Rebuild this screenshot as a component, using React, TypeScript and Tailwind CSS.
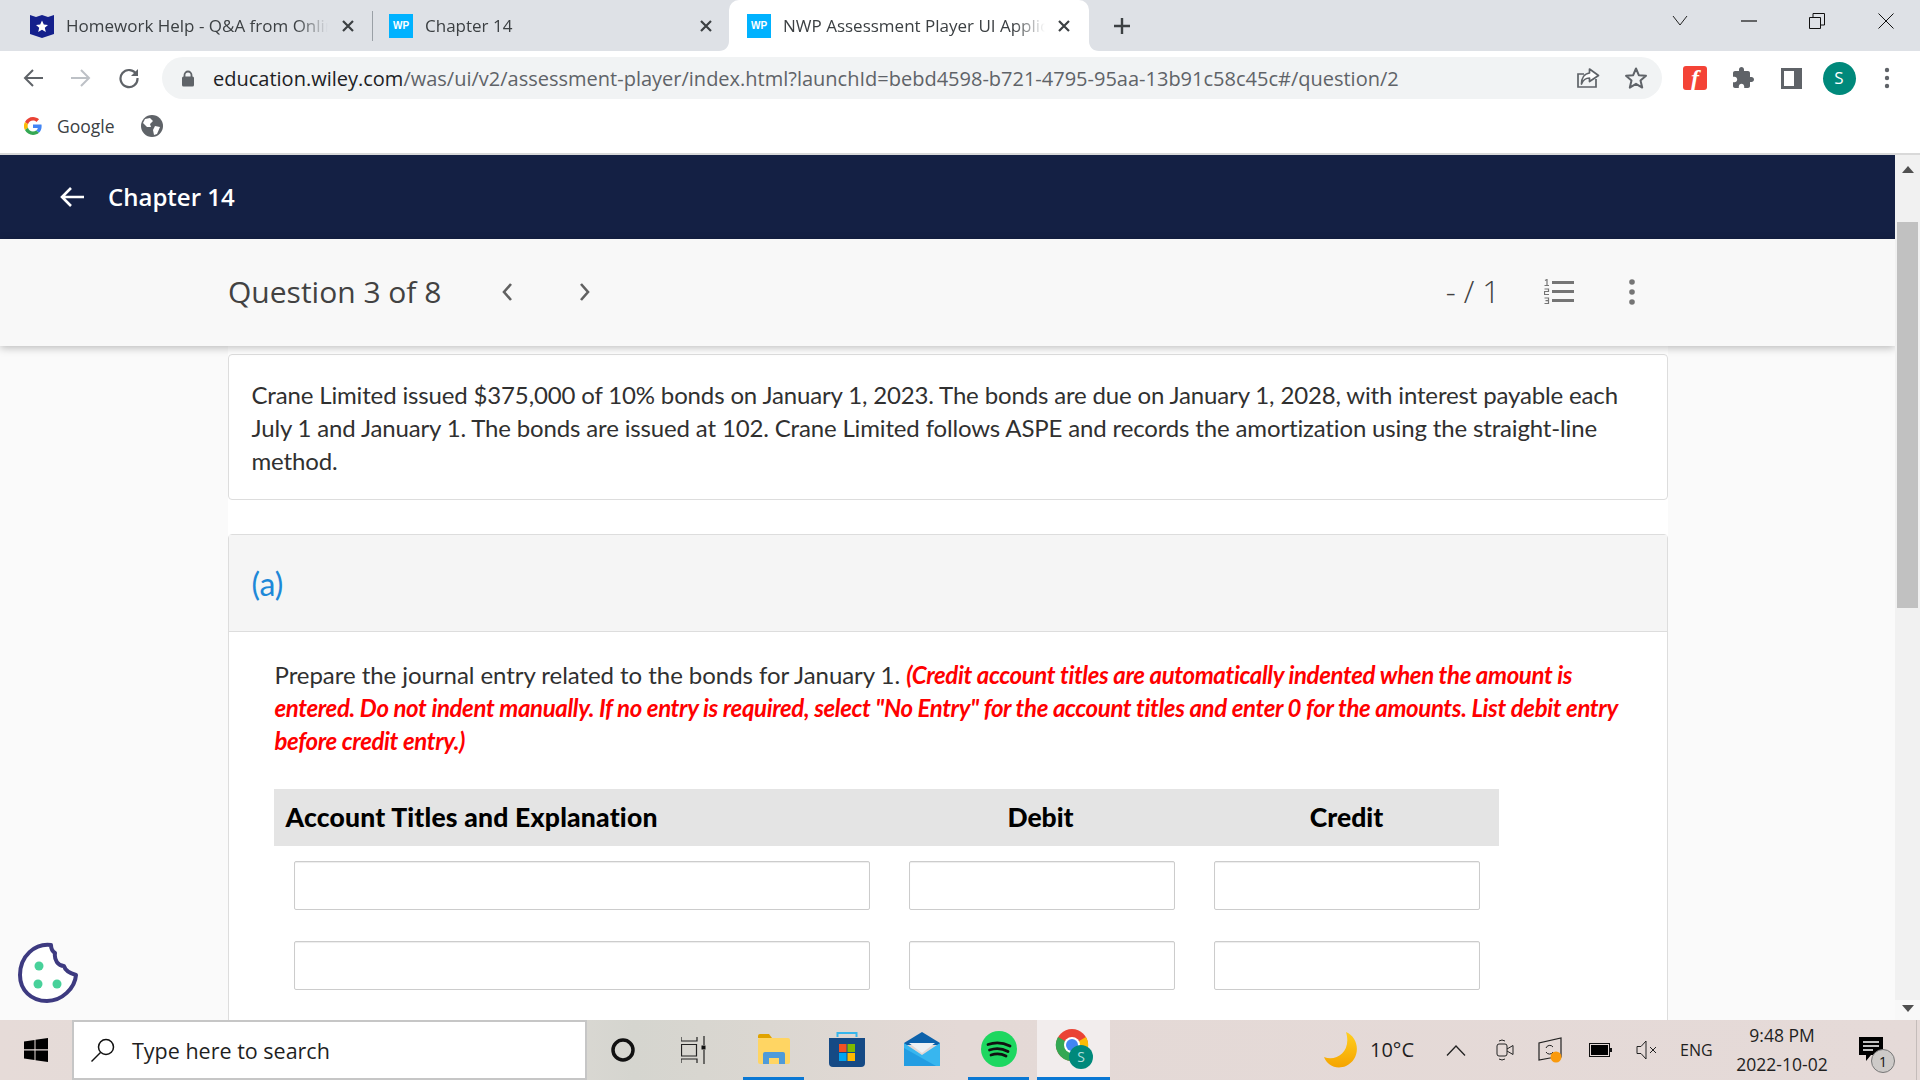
import React from "react";

const UI = "font-['Open_Sans',sans-serif]";

function X({ c = "#3c4043" }: { c?: string }) {
  return (
    <svg width="14" height="14" viewBox="0 0 14 14"><path d="M2 2 12 12M12 2 2 12" stroke={c} strokeWidth="2.2" /></svg>
  );
}

function WP() {
  return (
    <div className="w-6 h-6 shrink-0 bg-[#00b2ff] flex items-center justify-center text-white text-[10px] font-bold font-['Liberation_Sans',sans-serif]">WP</div>
  );
}

function Tab({ w, icon, title, active, children }: { w: string; icon: React.ReactNode; title: string; active?: boolean; children?: React.ReactNode }) {
  return (
    <div className={`${w} shrink-0 h-[51px] flex items-center relative ${active ? "bg-white rounded-t-[10px]" : ""}`}>
      {active && (
        <>
          <svg className="absolute left-[-10px] bottom-0" width="10" height="10" viewBox="0 0 10 10"><path d="M10 0V10H0C6 10 10 6 10 0Z" fill="#fff" /></svg>
          <svg className="absolute right-[-10px] bottom-0" width="10" height="10" viewBox="0 0 10 10"><path d="M0 0V10H10C4 10 0 6 0 0Z" fill="#fff" /></svg>
        </>
      )}
      {icon}
      <div className="ml-3 flex-1 overflow-hidden whitespace-nowrap text-[17px] text-[#3c4043] [mask-image:linear-gradient(to_right,black_88%,transparent)]">{title}</div>
      {children}
    </div>
  );
}

function TabStrip() {
  return (
    <div className={`h-[51px] bg-[#dee1e6] flex items-center ${UI}`}>
      <div className="w-[30px]" />
      <Tab
        w="w-[298px]"
        title="Homework Help - Q&A from Online Tutors"
        icon={
          <svg width="24" height="24" viewBox="0 0 24 24" className="shrink-0">
            <path d="M0 1 6 3 12 1 18 3 24 1V20L12 24 0 20Z" fill="#14208c" />
            <path d="M12 6.5 13.8 10.500 18 11 14.800 13.800 15.800 18 12 15.800 8.200 18 9.200 13.800 6 11 10.200 10.500Z" fill="#fff" />
          </svg>
        }
      />
      <div className="w-[18px] flex justify-center ml-[11px] mr-[15px]"><X /></div>
      <div className="w-px h-[30px] bg-[#9aa0a6] mr-[16px]" />
      <Tab w="w-[296px]" icon={<WP />} title="Chapter 14" />
      <div className="w-[18px] flex justify-center ml-[12px] mr-[14px]"><X /></div>
      <Tab w="w-[360px] pl-[18px] pr-[16px]" icon={<WP />} active title="NWP Assessment Player UI Application">
        <div className="w-[18px] ml-[10px] flex justify-center"><X /></div>
      </Tab>
      <div className="w-[66px] flex justify-center">
        <svg width="20" height="20" viewBox="0 0 20 20"><path d="M10 2V18M2 10H18" stroke="#3c4043" strokeWidth="2.4" /></svg>
      </div>
      <div className="flex-1" />
      <div className="flex items-center pb-[10px]">
        <div className="w-[69px] flex justify-center">
          <svg width="16" height="11" viewBox="0 0 16 11"><path d="M1 1 8 10 15 1" fill="none" stroke="#222" /></svg>
        </div>
        <div className="w-[69px] flex justify-center">
          <svg width="16" height="2" viewBox="0 0 16 2"><path d="M0 1H16" stroke="#111" strokeWidth="1.2" /></svg>
        </div>
        <div className="w-[68px] flex justify-center">
          <svg width="16" height="16" viewBox="0 0 16 16"><path d="M.5 4.500H11.500V15.500H.5ZM4 4V.5H15.500V12H12" fill="none" stroke="#111" /></svg>
        </div>
        <div className="w-[69px] flex justify-center">
          <svg width="16" height="16" viewBox="0 0 16 16"><path d="M.5.5 15.500 15.500M15.500.5 .5 15.500" stroke="#111" /></svg>
        </div>
      </div>
    </div>
  );
}

function Toolbar() {
  return (
    <div className={`h-[54px] bg-white flex items-center ${UI}`}>
      <div className="w-[66px] flex justify-center">
        <svg width="22" height="20" viewBox="0 0 22 20"><path d="M21 10H3M11 2 3 10 11 18" fill="none" stroke="#5f6368" strokeWidth="2" /></svg>
      </div>
      <div className="w-[30px] flex justify-center">
        <svg width="22" height="20" viewBox="0 0 22 20"><path d="M1 10H19M11 2 19 10 11 18" fill="none" stroke="#bdc1c6" strokeWidth="2" /></svg>
      </div>
      <div className="w-[66px] flex justify-center">
        <svg width="22" height="22" viewBox="0 0 22 22"><path d="M18.500 7.500A8.500 8.500 0 1 0 19.500 11" fill="none" stroke="#5f6368" strokeWidth="2.2" /><path d="M20 2V9H13Z" fill="#5f6368" /></svg>
      </div>
      <div className="w-[1500px] h-[42px] bg-[#f1f3f4] rounded-full flex items-center">
        <div className="w-[51px] flex justify-center">
          <svg width="14" height="17" viewBox="0 0 14 17"><path d="M3.500 7V5a3.500 3.500 0 0 1 7 0V7" fill="none" stroke="#5f6368" strokeWidth="1.8" /><rect x="1" y="6.500" width="12" height="10" rx="1.500" fill="#5f6368" /></svg>
        </div>
        <div className="flex-1 mt-[1px] whitespace-nowrap text-[20px] text-[#5f6368]">
          <span className="text-[#202124]">education.wiley.com</span>/was/ui/v2/assessment-player/index.html?launchId=bebd4598-b721-4795-95aa-13b91c58c45c#/question/2
        </div>
        <svg className="mr-[24px]" width="24" height="24" viewBox="0 0 24 24"><path d="M20 13V21H2V8H8" fill="none" stroke="#5f6368" strokeWidth="1.7" /><path d="M13.500 3 22.500 9.500 13.500 15.500V12C10 12 7 14 5.500 18 5.500 12 8.500 7.500 13.500 7Z" fill="#fff" stroke="#5f6368" strokeWidth="1.7" strokeLinejoin="round" /></svg>
        <svg className="mr-[14px]" width="24" height="24" viewBox="0 0 24 24"><path d="M12 2.500 14.800 9.200 22 9.800 16.500 14.500 18.200 21.600 12 17.800 5.800 21.600 7.500 14.500 2 9.800 9.200 9.200Z" fill="none" stroke="#5f6368" strokeWidth="2" strokeLinejoin="round" /></svg>
      </div>
      <div className="w-6 h-6 ml-[21px] rounded-[3px] bg-[#f44336] flex items-center justify-center">
        <span className="text-white font-bold italic text-[24px] leading-none font-['Liberation_Serif',serif]">f</span>
      </div>
      <div className="w-[48px] ml-[12px] flex justify-center">
        <svg width="24" height="24" viewBox="0 0 24 24"><path d="M20.500 11H19V7c0-1.100-.9-2-2-2h-4V3.500C13 2.120 11.880 1 10.500 1S8 2.120 8 3.500V5H4c-1.100 0-1.990.9-1.990 2v3.800H3.500c1.490 0 2.700 1.210 2.700 2.700s-1.210 2.700-2.700 2.700H2V20c0 1.100.9 2 2 2h3.800v-1.500c0-1.490 1.210-2.700 2.700-2.700 1.490 0 2.700 1.210 2.700 2.700V22H17c1.100 0 2-.9 2-2v-4h1.500c1.380 0 2.500-1.120 2.500-2.500S21.880 11 20.500 11z" fill="#5f6368" /></svg>
      </div>
      <div className="w-[48px] flex justify-center">
        <svg width="21" height="21" viewBox="0 0 21 21"><rect width="21" height="21" fill="#5f6368" /><rect x="3" y="3" width="10" height="15" fill="#fff" /></svg>
      </div>
      <div className="w-[48px] flex justify-center">
        <div className="w-[33px] h-[33px] rounded-full bg-[#00897b] text-white flex items-center justify-center text-[17px]">S</div>
      </div>
      <div className="w-[48px] flex justify-center">
        <svg width="6" height="22" viewBox="0 0 6 22"><circle cx="3" cy="3" r="2.200" fill="#5f6368" /><circle cx="3" cy="11" r="2.200" fill="#5f6368" /><circle cx="3" cy="19" r="2.200" fill="#5f6368" /></svg>
      </div>
    </div>
  );
}

function Bookmarks() {
  return (
    <div className={`h-[50px] bg-white border-b-2 border-[#d9d9d9] flex items-center pl-[24px] pb-[6px] ${UI}`}>
      <svg width="18" height="18" viewBox="0 0 48 48">
        <path fill="#EA4335" d="M24 9.500c3.500 0 6.700 1.200 9.200 3.600l6.900-6.900C35.900 2.400 30.400 0 24 0 14.600 0 6.500 5.400 2.600 13.200l8 6.200C12.400 13.700 17.700 9.500 24 9.500z" />
        <path fill="#4285F4" d="M47 24.500c0-1.600-.1-3.100-.4-4.500H24v9h12.900c-.6 3-2.200 5.500-4.700 7.200l7.700 6C44.400 38.100 47 31.900 47 24.500z" />
        <path fill="#FBBC05" d="M10.500 28.600A14.500 14.500 0 0 1 10.500 19.400l-8-6.200a24 24 0 0 0 0 21.600z" />
        <path fill="#34A853" d="M24 48c6.500 0 11.900-2.100 15.900-5.800l-7.700-6c-2.200 1.400-4.900 2.300-8.200 2.300-6.300 0-11.600-4.200-13.500-9.900l-8 6.200C6.500 42.600 14.600 48 24 48z" />
      </svg>
      <div className="ml-[15px] w-[84px] text-[17.500px] text-[#3c4043]">Google</div>
      <svg width="22" height="22" viewBox="0 0 22 22">
        <circle cx="11" cy="11" r="11" fill="#5f6368" />
        <path d="M4 4 9 3 12 6 9 9 10 12 6 12 2 8ZM14 11 19 12 16 19 13 20 12 15Z" fill="#fff" />
      </svg>
    </div>
  );
}

function Page() {
  return (
    <div className="flex-1 min-w-0 flex flex-col bg-[#fafafa] overflow-hidden font-['Lato',sans-serif]">
      <div className="h-[84px] shrink-0 bg-[#142044] flex items-center pl-[59px] text-white">
        <svg width="25" height="24" viewBox="0 0 25 24"><path d="M25 12H3M12 3 3 12 12 21" fill="none" stroke="#fff" strokeWidth="2.600" /></svg>
        <span className={`ml-[24px] text-[24px] font-semibold ${UI}`}>Chapter 14</span>
      </div>
      <div className="h-[107px] shrink-0 bg-[#f8f8f8] relative z-10 shadow-[0_2px_8px_rgba(0,0,0,0.25)] flex items-center pl-[228px] pb-[2px]">
        <span className={`w-[272px] text-[30px] text-[#424242] ${UI}`}>Question 3 of 8</span>
        <svg width="14" height="22" viewBox="0 0 14 22"><path d="M11 3 4 11 11 19" fill="none" stroke="#616161" strokeWidth="2.600" /></svg>
        <svg className="ml-[64px]" width="14" height="22" viewBox="0 0 14 22"><path d="M3 3 10 11 3 19" fill="none" stroke="#616161" strokeWidth="2.600" /></svg>
        <div className="flex-1" />
        <span className={`text-[31px] text-[#424242] font-light ${UI}`}>- / 1</span>
        <svg className="ml-[44px]" width="30" height="25" viewBox="0 0 30 25">
          <path d="M8 3.500H30M8 12.500H30M8 21.500H30" stroke="#757575" strokeWidth="3" />
          <path d="M1 1.500 3 .5V6.500M.5 6.500H5M.5 10H4.500V12.500H.5V15.500H5M.5 19H4.500V24.500H.5M1.500 21.700H4.500" fill="none" stroke="#757575" strokeWidth="1.200" />
        </svg>
        <svg className="ml-[55px] mr-[260px]" width="6" height="26" viewBox="0 0 6 26"><circle cx="3" cy="3" r="2.800" fill="#757575" /><circle cx="3" cy="13" r="2.800" fill="#757575" /><circle cx="3" cy="23" r="2.800" fill="#757575" /></svg>
      </div>
      <div className="flex-1 min-h-0 mx-auto w-[1440px] bg-white pt-2 overflow-hidden">
        <div className="h-[146px] border border-[#dddddd] rounded-[4px] bg-white px-[23px] pt-[23px] text-[24px] tracking-[-0.15px] leading-[33px] text-[#303030]">
          Crane Limited issued $375,000 of 10% bonds on January 1, 2023. The bonds are due on January 1, 2028, with interest payable each July 1 and January 1. The bonds are issued at 102. Crane Limited follows ASPE and records the amortization using the straight-line method.
        </div>
        <div className="mt-[34px] border border-[#dddddd] rounded-t-[4px] h-[600px]">
          <div className="h-[97px] bg-[#f5f5f5] border-b border-[#dddddd] flex items-center pl-[23px] pt-[2px] text-[32px] text-[#1e88d8]">(a)</div>
          <div className="pl-[46px] pr-[26px] pt-[26px]">
            <p className="text-[24px] leading-[33px] text-[#303030] tracking-[-0.05px]">
              Prepare the journal entry related to the bonds for January 1.{" "}
              <span className="text-[#ff0000] font-bold italic tracking-[-0.36px]">
                (Credit account titles are automatically indented when the amount is entered. Do not indent manually. If no entry is required, select "No Entry" for the account titles and enter 0 for the amounts. List debit entry before credit entry.)
              </span>
            </p>
            <div className="mt-[32px] -ml-[1px] w-[1225px] h-[57px] pt-[1px] bg-[#e4e4e4] grid grid-cols-[613px_308px_304px] items-center text-[26.500px] font-black text-black">
              <div className="pl-[12px] tracking-[0.2px]">Account Titles and Explanation</div>
              <div className="text-center">Debit</div>
              <div className="text-center">Credit</div>
            </div>
            <div className="mt-[15px] ml-[19px] flex flex-col gap-[31px]">
              {[0, 1].map((i) => (
                <div key={i} className="flex gap-[39px]">
                  <div className="w-[576px] h-[49px] border border-[#cccccc] rounded-[2px] bg-white shadow-[inset_0_1px_1px_rgba(0,0,0,0.075)]" />
                  <div className="w-[266px] h-[49px] border border-[#cccccc] rounded-[2px] bg-white shadow-[inset_0_1px_1px_rgba(0,0,0,0.075)]" />
                  <div className="w-[266px] h-[49px] border border-[#cccccc] rounded-[2px] bg-white shadow-[inset_0_1px_1px_rgba(0,0,0,0.075)]" />
                </div>
              ))}
            </div>
          </div>
        </div>
      </div>
    </div>
  );
}

function Scrollbar() {
  return (
    <div className="w-[25px] shrink-0 bg-[#f1f1f1] flex flex-col items-center">
      <div className="h-[67px] w-full flex justify-center pt-[11px]">
        <svg width="12" height="7" viewBox="0 0 12 7"><path d="M6 0 12 7H0Z" fill="#505050" /></svg>
      </div>
      <div className="h-[386px] w-[21px] bg-[#c1c1c1]" />
      <div className="flex-1" />
      <div className="h-[20px] w-full flex justify-center pt-[5px] bg-[#f8f8f8]">
        <svg width="12" height="7" viewBox="0 0 12 7"><path d="M0 0H12L6 7Z" fill="#505050" /></svg>
      </div>
    </div>
  );
}

function Slot({ w, on, bg, children }: { w: string; on?: boolean; bg?: string; children: React.ReactNode }) {
  return (
    <div className={`${w} h-[60px] shrink-0 flex items-center justify-center border-b-[3px] ${on ? "border-[#0a78d4]" : "border-transparent"} ${bg ?? ""}`}>
      {children}
    </div>
  );
}

function Taskbar() {
  return (
    <div className={`h-[60px] shrink-0 flex items-center bg-[linear-gradient(90deg,#e6dbd8_0%,#e0dcd8_25%,#d5d5cf_33%,#dbd7d1_40%,#e4d9d6_50%,#e5dad8_100%)] ${UI}`}>
      <div className="w-[72px] flex justify-center">
        <svg width="24" height="24" viewBox="0 0 24 24"><path d="M0 3.500 10.500 2V11.300H0ZM11.500 1.800 24 0V11.300H11.500ZM0 12.500H10.500V22L0 20.500ZM11.500 12.500H24V24L11.500 22.200Z" fill="#000" /></svg>
      </div>
      <div className="w-[515px] h-[60px] bg-white border-2 border-[#c6c6c6] flex items-center pl-[16px]">
        <svg width="26" height="26" viewBox="0 0 26 26"><circle cx="16" cy="10" r="7.500" fill="none" stroke="#111" strokeWidth="1.500" /><path d="M10.500 15.500 1.500 24.500" stroke="#111" strokeWidth="1.500" /></svg>
        <span className="ml-[16px] mt-[2px] text-[21.500px] text-[#1f1f1f]">Type here to search</span>
      </div>
      <div className="w-[72px] flex justify-center">
        <svg width="26" height="26" viewBox="0 0 26 26"><circle cx="13" cy="13" r="10" fill="none" stroke="#111" strokeWidth="3.500" /></svg>
      </div>
      <div className="w-[70px] flex justify-center">
        <svg width="26" height="28" viewBox="0 0 26 28"><path d="M0 1V5H16V1M0 27V23H16V27M.5 8.500H15.500V20H.5ZM23 0V9M23 14V28" fill="none" stroke="#222" strokeWidth="1.200" /><rect x="20.500" y="9.500" width="4" height="4" fill="#111" /></svg>
      </div>
      <div className="w-[14px]" />
      <Slot w="w-[61px]" on>
        <svg width="32" height="32" viewBox="0 0 32 32">
          <path d="M0 3a2 2 0 0 1 2-2H11L14 5H0Z" fill="#e0a300" />
          <rect x="0" y="5" width="32" height="26" rx="2" fill="#ffd563" />
          <path d="M5 31V21a2 2 0 0 1 2-2H25a2 2 0 0 1 2 2V31H21V25H11V31Z" fill="#4f9bd9" />
        </svg>
      </Slot>
      <div className="w-[12px]" />
      <Slot w="w-[62px]">
        <svg width="36" height="36" viewBox="0 0 36 36">
          <path d="M8.500 6V2H27.500V6" fill="none" stroke="#36b6ec" strokeWidth="2" />
          <path d="M0 7H36V32a4 4 0 0 1-4 4H4a4 4 0 0 1-4-4Z" fill="#154a85" />
          <rect x="10" y="13" width="7.500" height="8" fill="#f25022" /><rect x="18.500" y="13" width="7.500" height="8" fill="#7fba00" />
          <rect x="10" y="22" width="7.500" height="8" fill="#00a4ef" /><rect x="18.500" y="22" width="7.500" height="8" fill="#ffb900" />
        </svg>
      </Slot>
      <div className="w-[13px]" />
      <Slot w="w-[62px]">
        <svg width="36" height="34" viewBox="0 0 36 34">
          <path d="M0 11 18 0 36 11V13H0Z" fill="#0d62ab" />
          <path d="M5 11H31L18 21Z" fill="#eef1f4" />
          <path d="M0 11 18 23 36 11V34H0Z" fill="#38b6ef" />
          <path d="M0 34V16L32 34Z" fill="#1b93dd" opacity="0.7" />
        </svg>
      </Slot>
      <div className="w-[15px]" />
      <Slot w="w-[61px]" on>
        <svg width="36" height="36" viewBox="0 0 36 36">
          <circle cx="18" cy="18" r="18" fill="#1ed760" />
          <path d="M7 13.500Q18 9.500 29 15M8.500 19Q18 15.500 27 20.500M10 24Q18 21.500 25 25" fill="none" stroke="#111" strokeWidth="2.800" strokeLinecap="round" />
        </svg>
      </Slot>
      <div className="w-[8px]" />
      <Slot w="w-[73px]" on bg="bg-[#f2eded]">
        <svg width="38" height="42" viewBox="0 0 38 42">
          <circle cx="17" cy="17" r="16" fill="#ea4335" />
          <path d="M17 17 31 9A16 16 0 0 1 17 33Z" fill="#fbbc05" />
          <path d="M17 17 3 9A16 16 0 0 0 17 33Z" fill="#34a853" />
          <circle cx="17" cy="17" r="8" fill="#fff" /><circle cx="17" cy="17" r="6" fill="#4285f4" />
          <circle cx="26" cy="29" r="12" fill="#00897b" />
          <text x="26" y="34" textAnchor="middle" fontSize="14" fill="#b2dfdb" fontFamily="Open Sans">S</text>
        </svg>
      </Slot>
      <div className="flex-1" />
      <div className="w-[40px] flex justify-center">
        <svg width="34" height="36" viewBox="0 0 34 36">
          <defs><linearGradient id="mn" x1="0" y1="0" x2="0" y2="1"><stop offset="0" stopColor="#ffcf1f" /><stop offset="1" stopColor="#f5a400" /></linearGradient></defs>
          <path d="M22 0C36 6 37 27 22 34 12 38 3 33 0 25 12 30 28 20 22 0Z" fill="url(#mn)" />
        </svg>
      </div>
      <span className="ml-[9px] w-[65px] text-[20px] text-[#1f1f1f]">10°C</span>
      <div className="w-[42px] flex justify-center">
        <svg width="20" height="11" viewBox="0 0 20 11"><path d="M1 10.500 10 1 19 10.500" fill="none" stroke="#222" strokeWidth="1.300" /></svg>
      </div>
      <div className="w-[56px] flex justify-center">
        <svg width="18" height="24" viewBox="0 0 18 24"><rect x="1" y="6" width="10" height="12" rx="2" fill="none" stroke="#222" /><path d="M11 11 17 7.500V16.500L11 13M3 3Q6 1 9 3M3 21Q6 23 9 21" fill="none" stroke="#222" /></svg>
      </div>
      <div className="w-[34px] flex justify-center">
        <svg width="24" height="26" viewBox="0 0 24 26"><path d="M1 6V23L12 21 23 20V1Z" fill="none" stroke="#222" strokeWidth="1.200" /><path d="M8 11a4 4 0 0 1 7-1M15 15a4 4 0 0 1-7 0" fill="none" stroke="#222" /><circle cx="18" cy="20" r="5.500" fill="#f99a0d" /></svg>
      </div>
      <div className="w-[66px] flex justify-center">
        <svg width="23" height="14" viewBox="0 0 23 14"><rect x=".5" y=".5" width="20" height="13" fill="none" stroke="#111" /><rect x="2" y="2" width="17" height="10" fill="#000" /><rect x="21" y="5" width="2" height="4" fill="#111" /></svg>
      </div>
      <div className="w-[28px] flex justify-center">
        <svg width="22" height="20" viewBox="0 0 22 20"><path d="M1 6.500H5L10 1V19L5 13.500H1ZM14 7 20 13M20 7 14 13" fill="none" stroke="#222" /></svg>
      </div>
      <span className="ml-[19px] w-[37px] text-[16px] text-[#1f1f1f]">ENG</span>
      <div className="ml-[17px] w-[96px] flex flex-col items-center text-[17.500px] leading-[29px] text-[#1f1f1f] whitespace-nowrap">
        <span>9:48 PM</span>
        <span>2022-10-02</span>
      </div>
      <div className="w-[54px] ml-[14px] h-[60px] flex items-center justify-center relative">
        <svg width="24" height="26" viewBox="0 0 24 26"><path d="M0 0H24V18H12L7 24V18H0Z" fill="#000" /><path d="M4 5H20M4 9H20M4 13H14" stroke="#fff" strokeWidth="1.500" /></svg>
        <div className="absolute left-[27px] top-[29px] w-[24px] h-[24px] rounded-full bg-[#cdcac8] border border-[#777] flex items-center justify-center text-[14px] text-[#111]">1</div>
      </div>
      <div className="w-[18px]" />
      <div className="w-px h-[60px] bg-[#c4bcba]" />
      <div className="w-[3px]" />
    </div>
  );
}

export default function App() {
  return (
    <div className="w-[1920px] h-[1080px] flex flex-col overflow-hidden">
      <TabStrip />
      <Toolbar />
      <Bookmarks />
      <div className="h-[865px] flex min-h-0 relative">
        <Page />
        <Scrollbar />
        <svg className="absolute left-[17px] top-[787px]" width="62" height="62" viewBox="0 0 62 62">
          <path d="M34 3C18 1 3 14 3 33 3 48 14 59 30 59 45 59 58 46 59 33 52 31 48 28 47 24 41 24 37 18 38 11 35 9 34 6 34 3Z" fill="#fff" stroke="#3d3a80" strokeWidth="4" strokeLinejoin="round" />
          <circle cx="22" cy="24" r="4.500" fill="#48d19a" /><circle cx="21" cy="42" r="4.500" fill="#48d19a" /><circle cx="40" cy="42" r="4.500" fill="#48d19a" />
        </svg>
      </div>
      <Taskbar />
    </div>
  );
}
